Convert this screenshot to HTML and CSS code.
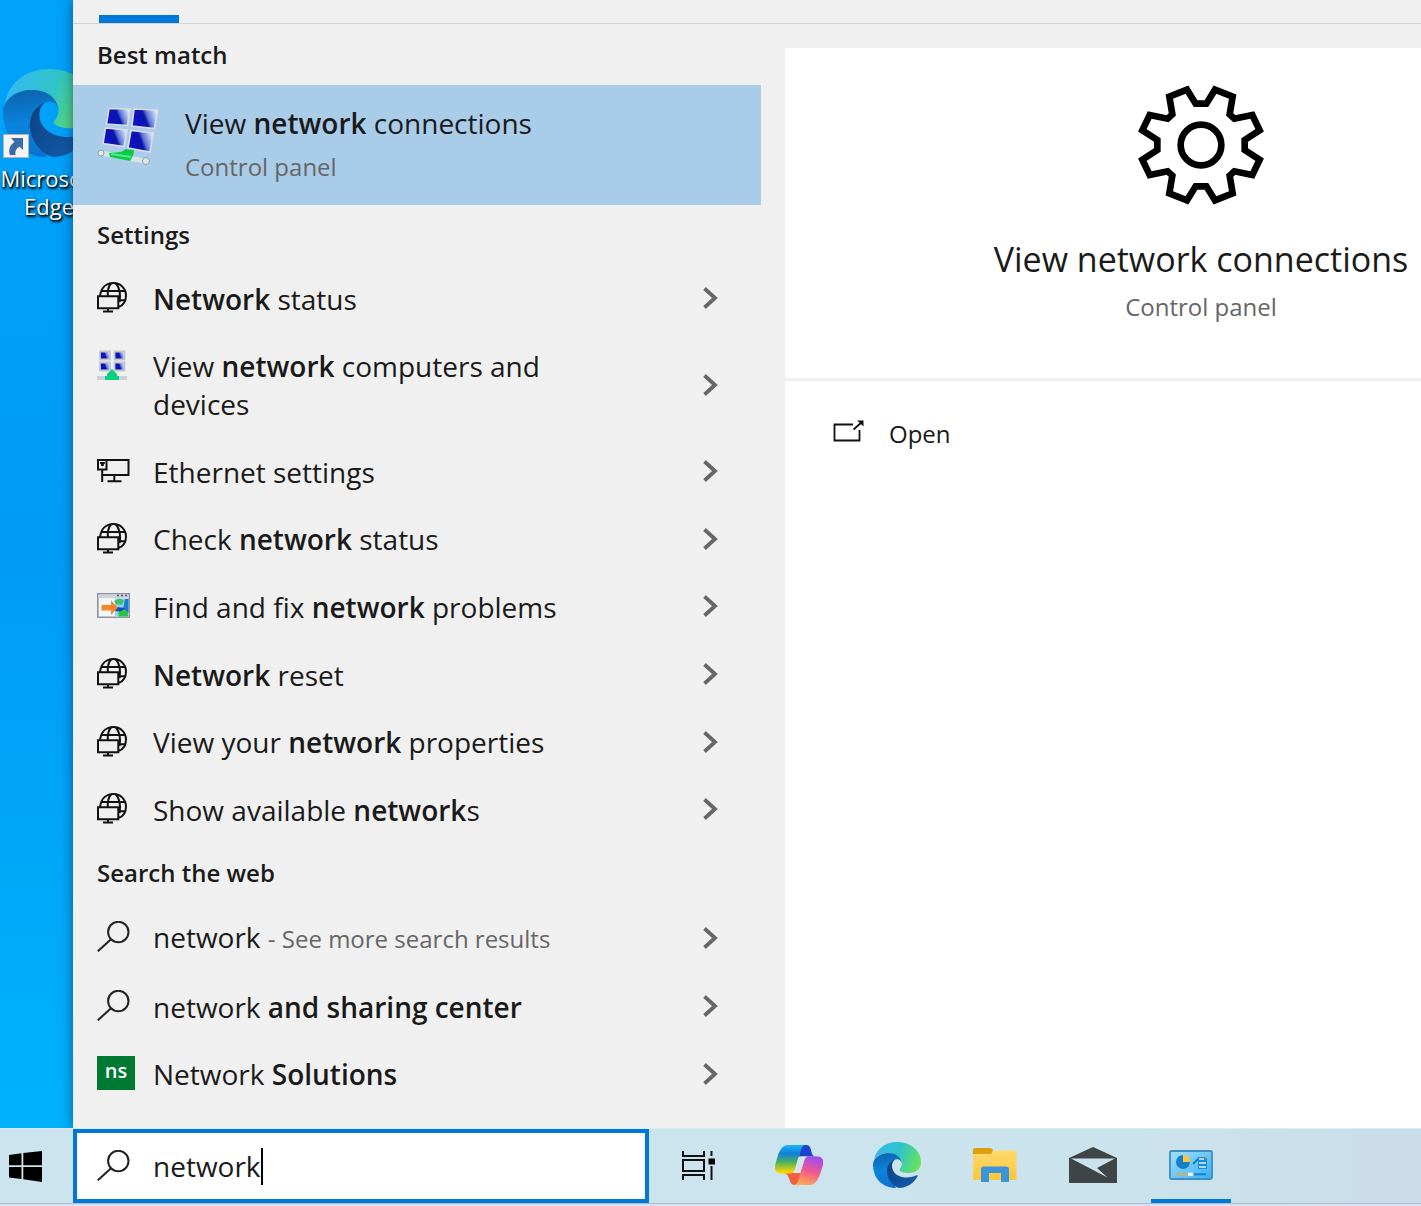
FILE: index.html
```html
<!DOCTYPE html>
<html lang="en">
<head>
<meta charset="utf-8">
<title>Search</title>
<link rel="stylesheet" href="styles.css">
</head>
<body>
<svg class="sprite" aria-hidden="true">
  <defs>
    <linearGradient id="edge-top" x1="0" y1="0.3" x2="1" y2="0.6"><stop offset="0" stop-color="#35b8f1"/><stop offset="0.5" stop-color="#2fc4c8"/><stop offset="1" stop-color="#66e35a"/></linearGradient>
    <linearGradient id="edge-left" x1="0.3" y1="0" x2="0.4" y2="1"><stop offset="0" stop-color="#0c63ae"/><stop offset="0.5" stop-color="#0a84dc"/><stop offset="1" stop-color="#0a72d0"/></linearGradient>
    <linearGradient id="edge-low" x1="0" y1="0" x2="1" y2="1"><stop offset="0" stop-color="#0d3f80"/><stop offset="1" stop-color="#1160ae"/></linearGradient>
    <linearGradient id="screen" x1="0" y1="0.6" x2="1" y2="0.3"><stop offset="0" stop-color="#0a12d0"/><stop offset="0.5" stop-color="#0c14a8"/><stop offset="0.62" stop-color="#5a74d8"/><stop offset="1" stop-color="#e4ecff"/></linearGradient>
    <linearGradient id="cop-a" x1="0" y1="0" x2="0" y2="1"><stop offset="0" stop-color="#1eb4f4"/><stop offset="0.3" stop-color="#0f7fdc"/><stop offset="0.62" stop-color="#52b45a"/><stop offset="0.95" stop-color="#ffd400"/></linearGradient>
    <linearGradient id="cop-b" x1="0.6" y1="0" x2="0.3" y2="1"><stop offset="0" stop-color="#a44cf0"/><stop offset="0.5" stop-color="#f0588c"/><stop offset="1" stop-color="#ffac54"/></linearGradient>
    <linearGradient id="folder" x1="0" y1="0" x2="0" y2="1"><stop offset="0" stop-color="#ffd96e"/><stop offset="1" stop-color="#fcc63a"/></linearGradient>
    <linearGradient id="panel-fill" x1="0" y1="0" x2="1" y2="1"><stop offset="0" stop-color="#a4e0fc"/><stop offset="1" stop-color="#36b0f6"/></linearGradient>
  </defs>
  <symbol id="i-globe" viewBox="0 0 30 31">
    <g fill="none" stroke="#111" stroke-width="2">
      <path d="M1 14.300H21.300V26.300H1zM11 26.300V29.500M6 29.600H16M3 14.300C4 6 9 1 16.500 1C24 1 29 7 29 13.500C29 19 26 23.500 21.500 25M5 9H28.600M22 18.300H28.400M10.800 14V9M11 9C11.500 5 13 2 15 1M22.300 9C21.500 5 20 2 18 1M22.500 9C23.300 13 23.300 16 22.600 20"/>
    </g>
  </symbol>
  <symbol id="i-ethernet" viewBox="0 0 33 24">
    <path fill="none" stroke="#111" stroke-width="2" d="M9.500 1H31.500V16H5.500M1 1H9.500V10.500H1zM5.200 10.500V23M17.300 16V22M10.500 22.200H24.500M3 4H7.800M4 6H6.800"/>
  </symbol>
  <symbol id="i-search" viewBox="0 0 33 31">
    <circle cx="21.300" cy="11" r="10.200" fill="none" stroke="#222" stroke-width="2"/>
    <path d="M14 18.300L.8 30.300" fill="none" stroke="#222" stroke-width="2"/>
  </symbol>
  <symbol id="i-chevron" viewBox="0 0 16 22">
    <path d="M2.500 1.500L13 11L2.500 20.500" fill="none" stroke="#666" stroke-width="3.800"/>
  </symbol>
  <symbol id="i-edge" viewBox="0 0 48 46">
    <path d="M1 18C3 7 12 0 24 0C38 0 48 9 48 20C48 27 43 31 36 31C31 31 26 29.500 26.500 27.500C27 26.500 29 25 29 21C28 15 22 11 15 11C8 11 3 14 1 18z" fill="url(#edge-top)"/>
    <path d="M0 22C1 15 8 11 15 11C22 11 28 14 29 21.500C28 18 26 17 23.500 17.200C20.500 17.500 18.500 20 19 25L20 40L23 46C10 46 0 37 0 22z" fill="url(#edge-left)"/>
    <path d="M22 17.500C16 20 13.500 25 14 31C15 38 20 44.500 26 46C34 46 41 41 44.500 34.500C44.800 33.500 44 33 43 33.600C34 38 20 35 19 25C18.800 21 20 19 22 17.500z" fill="url(#edge-low)"/>
  </symbol>
</svg>

<main class="desktop">
  <a class="shortcut" href="#edge">
    <span class="shortcut-art">
      <svg width="92" height="90"><use href="#i-edge"/></svg>
      <svg class="shortcut-arrow" width="26" height="24" viewBox="0 0 26 24"><path d="M.5.500H25.500V23.500H.5z" fill="#f4f4f4" stroke="#b9aeb0"/><path d="M8 4H20V16L16.500 12.500C13 15 12 17 12.500 21H7C5 16 7 11 11.500 8z" fill="#3b6ba8"/></svg>
    </span>
    <span class="shortcut-label">Microsoft Edge</span>
  </a>

  <section class="flyout" aria-label="Search results">
    <header class="tabs"><span class="tab-mark"></span></header>
    <div class="columns">
      <div class="results">
        <h2 class="group">Best match</h2>
        <a class="best" href="#connections">
          <svg width="62" height="60" viewBox="0 0 62 60">
            <g fill="url(#screen)" stroke="#dcdce0" stroke-width="1.600">
              <path d="M12 1.500L33 2L30.500 18.500L9.500 17z"/><path d="M37 2L60.500 3L57.500 21.500L35 19z"/>
              <path d="M8.500 21L30 23L27 39.500L6 36.500z"/><path d="M34 23.500L56.500 26L53 45L31 41z"/>
            </g>
            <path d="M4 46L48 54" stroke="#d8e4ea" stroke-width="5" stroke-linecap="round"/>
            <circle cx="4" cy="46" r="3" fill="#e8eef0" stroke="#8ea0a8"/><circle cx="49" cy="54" r="3.500" fill="#dfe8ea" stroke="#8ea0a8"/>
            <path d="M12 46L24 45L29 42L37 43L36 49L33 54L13 50z" fill="#0cc848"/><path d="M14 47L34 50" stroke="#4cf080" stroke-width="2"/>
          </svg>
          <span class="best-text"><span class="title">View <b>network</b> connections</span><span class="sub">Control panel</span></span>
        </a>

        <h2 class="group">Settings</h2>
        <ul class="list">
          <li class="row"><a class="row-link" href="#status"><svg class="icon" width="30" height="31"><use href="#i-globe"/></svg><span class="label"><b>Network</b> status</span></a><svg class="chevron" width="16" height="22"><use href="#i-chevron"/></svg></li>
          <li class="row"><a class="row-link" href="#computers"><svg class="icon" width="30" height="31" viewBox="0 0 30 31"><g fill="url(#screen)" stroke="#c4c8cc" stroke-width="1.800"><path d="M3 1.500H13V9.500H3z"/><path d="M17.500 1.500H27.500V9.500H17.500z"/><path d="M3 12.500H13V20.500H3z"/><path d="M17.500 12.500H27.500V20.500H17.500z"/></g><path d="M0 26H30V30H0z" fill="#ccd2d6"/><path d="M15 19L20 24V26H22V30H8V26H10V24z" fill="#08d080"/></svg><span class="label">View <b>network</b> computers and devices</span></a><svg class="chevron" width="16" height="22"><use href="#i-chevron"/></svg></li>
          <li class="row"><a class="row-link" href="#ethernet"><svg class="icon" width="33" height="24"><use href="#i-ethernet"/></svg><span class="label">Ethernet settings</span></a><svg class="chevron" width="16" height="22"><use href="#i-chevron"/></svg></li>
          <li class="row"><a class="row-link" href="#check"><svg class="icon" width="30" height="31"><use href="#i-globe"/></svg><span class="label">Check <b>network</b> status</span></a><svg class="chevron" width="16" height="22"><use href="#i-chevron"/></svg></li>
          <li class="row"><a class="row-link" href="#fix"><svg class="icon" width="33" height="25" viewBox="0 0 33 25"><path d="M.8.800H32.200V24.200H.8z" fill="#f4f6f8" stroke="#8b95a0" stroke-width="1.600"/><path d="M1.500 1.500H31.500V5H1.500z" fill="#ccd3da"/><path d="M20 2.500h2m2 0h2m2 0h2" stroke="#556" stroke-width="1.500"/><path d="M18 5.500H31.500V23.500H18z" fill="#8ed4f6"/><path d="M28 6H31.500V20L26 16z" fill="#1c78cc"/><path d="M17 8L22 5.500L27 7L25 12L19 11z" fill="#3cc070"/><path d="M20 14L28 15L25 19L18 18z" fill="#1550b0"/><path d="M21 20L26 17L31 19V23.500H22z" fill="#28c83c"/><path d="M4.500 12H14V7.500L21 14.500L14 22V17.500H4.500z" fill="#f5872a"/></svg><span class="label">Find and fix <b>network</b> problems</span></a><svg class="chevron" width="16" height="22"><use href="#i-chevron"/></svg></li>
          <li class="row"><a class="row-link" href="#reset"><svg class="icon" width="30" height="31"><use href="#i-globe"/></svg><span class="label"><b>Network</b> reset</span></a><svg class="chevron" width="16" height="22"><use href="#i-chevron"/></svg></li>
          <li class="row"><a class="row-link" href="#properties"><svg class="icon" width="30" height="31"><use href="#i-globe"/></svg><span class="label">View your <b>network</b> properties</span></a><svg class="chevron" width="16" height="22"><use href="#i-chevron"/></svg></li>
          <li class="row"><a class="row-link" href="#available"><svg class="icon" width="30" height="31"><use href="#i-globe"/></svg><span class="label">Show available <b>network</b>s</span></a><svg class="chevron" width="16" height="22"><use href="#i-chevron"/></svg></li>
        </ul>

        <h2 class="group">Search the web</h2>
        <ul class="list">
          <li class="row"><a class="row-link" href="#web"><svg class="icon" width="33" height="31"><use href="#i-search"/></svg><span class="label">network <small class="hint">- See more search results</small></span></a><svg class="chevron" width="16" height="22"><use href="#i-chevron"/></svg></li>
          <li class="row"><a class="row-link" href="#sharing"><svg class="icon" width="33" height="31"><use href="#i-search"/></svg><span class="label">network <b>and sharing center</b></span></a><svg class="chevron" width="16" height="22"><use href="#i-chevron"/></svg></li>
          <li class="row"><a class="row-link" href="#solutions"><span class="icon ns">ns</span><span class="label">Network <b>Solutions</b></span></a><svg class="chevron" width="16" height="22"><use href="#i-chevron"/></svg></li>
        </ul>
      </div>

      <div class="preview">
        <div class="card">
          <svg width="128" height="122" viewBox="112 72 384 366"><g fill="none" stroke="#000" stroke-width="20"><path d="M288 131L320 131L346 89L399 110L390 163L404 176L458 165L480 211L435 240L435 270L480 299L458 345L404 334L390 347L399 400L346 421L320 379L288 379L262 421L209 400L218 347L204 334L150 345L128 299L173 270L173 240L128 211L150 165L204 176L218 163L209 110L262 89Z"/><circle cx="304" cy="255" r="61"/></g></svg>
          <h1 class="card-title">View network connections</h1>
          <p class="sub">Control panel</p>
        </div>
        <div class="actions">
          <button class="action" type="button"><svg width="32" height="22" viewBox="0 0 32 22"><path d="M20 4.500H1.500V20.500H26.500V10M20.500 9.500L29 2" fill="none" stroke="#111" stroke-width="1.800"/><path d="M24 .5H30.500V6.500z" fill="#111"/></svg>Open</button>
        </div>
      </div>
    </div>
  </section>
</main>

<nav class="taskbar" aria-label="Taskbar">
  <button class="start" type="button" aria-label="Start"><svg width="33" height="31" viewBox="0 0 33 31"><path d="M0 4L12.500 2.300V14.300H0zM14.300 2L33 0V14.300H14.300zM0 16H12.500V28L0 26.500zM14.300 16H33V31L14.300 28.300z"/></svg></button>
  <label class="search"><svg class="icon" width="33" height="31"><use href="#i-search"/></svg><input class="search-input" type="text" value="network" aria-label="Search"><span class="caret"></span></label>
  <button class="task" type="button" aria-label="Task view"><svg width="33" height="29" viewBox="0 0 33 29"><path d="M1 0V5H22V0M1 9H22V20H1zM1 29V24H22V29M29.500 0V5M29.500 15V29" fill="none" stroke="#111" stroke-width="2"/><path d="M26.500 7.500H33V13.500H26.500z"/></svg></button>
  <div class="apps">
    <button class="task" type="button" aria-label="Copilot"><svg width="48" height="40" viewBox="0 0 48 40"><path d="M25 0H31C35 0 35.500 3 36.500 7C37 10 38.500 11.500 41 11.500H24z" fill="#1a44d0"/><path d="M24 40H20C15 40 15 35 13 31C12 29 11 28.500 9 28H26z" fill="#f0603c"/><path d="M13 0H30C26.500 1 26 5 24 12L20 24C19 27 18 28.500 14 28.500H6C1 28.500-1 25 .5 19C3 10 5 0 13 0z" fill="url(#cop-a)"/><path d="M35 40H19C23 39 23.500 35 25 29L29 16C30 13 31 11.500 35 11.500H43C47 11.500 49 15 48 20C45 30 42 40 35 40z" fill="url(#cop-b)"/><path d="M26 11.500H32C30 12.500 29.500 14 28.500 18L25 28H17C19 27 19.500 26 20.500 23L22.500 15C23 12.500 24 11.500 26 11.500z" fill="#d4e6f0"/></svg></button>
    <button class="task" type="button" aria-label="Microsoft Edge"><svg width="48" height="46"><use href="#i-edge"/></svg></button>
    <button class="task" type="button" aria-label="File Explorer"><svg width="44" height="34" viewBox="0 0 44 34"><path d="M0 2Q0 0 2 0H17Q19 0 20 2L18 8H0z" fill="#e09e0c"/><path d="M0 6H18L21 2.500H42Q43.500 2.500 43.500 4V32H0z" fill="url(#folder)"/><path d="M8 34V21Q8 18.500 10.500 18.500H33Q36 18.500 36 21V34H28V25H16V34z" fill="#3a94dc"/></svg></button>
    <button class="task" type="button" aria-label="Mail"><svg width="48" height="36" viewBox="0 0 48 36"><path d="M0 11L24 0L48 11V36H0z" fill="#3f4446"/><path d="M2 11.500H46L28 21L38.500 30.500z" fill="#cbe2ec"/></svg></button>
    <button class="task active" type="button" aria-label="Control Panel"><svg width="44" height="30" viewBox="0 0 44 30"><rect x="1" y="1" width="42" height="28" rx="1.500" fill="url(#panel-fill)" stroke="#3c8fc0" stroke-width="1.800"/><circle cx="14" cy="12" r="7" fill="#1580cc"/><path d="M14 12V4.500A7.500 7.500 0 0 1 21.500 12z" fill="#ffc43a"/><path d="M24 14L29 9H30" stroke="#1478bc" stroke-width="1.800" fill="none"/><path d="M29 7H38V19H29z" fill="#1d8ad4"/><path d="M30 9h5m-5 4h7m-7 4h7" stroke="#d8f2ff" stroke-width="1.600"/><path d="M36 7.500h2" stroke="#f08830" stroke-width="2"/><path d="M7 24.300H19" stroke="#d8b050" stroke-width="2"/><path d="M19 24.300H24" stroke="#fff" stroke-width="3"/><path d="M25 24.300H37" stroke="#1580cc" stroke-width="2"/></svg></button>
  </div>
</nav>
</body>
</html>
```
FILE: styles.css
```css
* { box-sizing: border-box; }

body {
  margin: 0;
  height: 100vh;
  display: flex;
  flex-direction: column;
  overflow: hidden;
  padding-bottom: 2px;
  background: #dbe2f7;
  color: #1a1a1a;
  font-family: "Open Sans", "Noto Sans", sans-serif;
  font-size: 28px;
}

h1, h2, p, ul { margin: 0; padding: 0; }
ul { list-style: none; }
a { color: inherit; text-decoration: none; }
b { font-weight: 600; }
svg { display: block; flex: none; }
button { border: 0; padding: 0; background: none; color: inherit; font: inherit; }
.sprite { position: absolute; width: 0; height: 0; }

.desktop {
  position: relative;
  flex: 1;
  min-height: 0;
  display: flex;
  padding-left: 73px;
  background: linear-gradient(#00a2fa, #009cf8 50%, #00b2fb);
}

/* Desktop shortcut, partly under the flyout */
.shortcut {
  position: absolute;
  left: 0;
  top: 68px;
  width: 98px;
  color: #fff;
  font-size: 22px;
  line-height: 28px;
  text-align: center;
  text-shadow: 1px 2px 3px #000, 1px 1px 2px #000;
}
.shortcut-art { display: block; position: relative; margin-left: 3px; }
.shortcut-arrow { position: absolute; left: 0; bottom: 0; }
.shortcut-label { display: block; padding-top: 6px; }

.flyout {
  position: relative;
  flex: 1;
  min-width: 0;
  display: flex;
  flex-direction: column;
  overflow: hidden;
  background: #f0f0f0;
  box-shadow: 0 0 12px rgba(0, 40, 80, 0.6);
}
.tabs {
  flex: none;
  display: flex;
  align-items: flex-end;
  height: 24px;
  padding-left: 26px;
  border-bottom: 1px solid #d4d4d4;
}
.tab-mark { width: 80px; height: 8px; background: #0078d7; }

.columns { flex: 1; min-height: 0; display: flex; }

.results {
  flex: none;
  width: 712px;
  display: flex;
  flex-direction: column;
  padding: 1px 24px 20px 0;
}
.group {
  flex: none;
  padding-left: 24px;
  font-size: 24px;
  font-weight: 600;
  line-height: 60px;
}
.best {
  flex: none;
  display: flex;
  align-items: center;
  gap: 26px;
  height: 120px;
  padding: 0 24px;
  background: #a9cce9;
}
.best svg { margin-bottom: 16px; }
.best-text { display: flex; flex-direction: column; }
.title { line-height: 44px; }
.sub { color: #666; font-size: 24px; line-height: 44px; }

.list { display: contents; }
.row {
  flex: 1 0 auto;
  display: flex;
  align-items: center;
  padding: 14px 43px 14px 24px;
  line-height: 38px;
}
.row-link {
  flex: 1;
  display: grid;
  grid-template-columns: 56px 1fr;
  grid-template-rows: 38px auto;
  align-items: center;
}
.label { grid-area: 1 / 2 / span 2; max-width: 440px; }
.icon { margin-bottom: 2px; }
.chevron { margin-bottom: 1px; }
.hint { color: #666; font-size: 24px; }
.ns {
  width: 38px;
  height: 34px;
  background: #007a33;
  color: #fff;
  font-size: 20px;
  font-weight: 600;
  line-height: 30px;
  text-align: center;
}

.preview {
  flex: 1 0 832px;
  display: flex;
  flex-direction: column;
  gap: 3px;
  padding-top: 24px;
}
.card {
  display: flex;
  flex-direction: column;
  align-items: center;
  height: 330px;
  padding-top: 36px;
  background: #fff;
}
.card-title { padding-top: 27px; font-size: 34px; font-weight: 400; line-height: 52px; }
.actions { flex: 1; padding: 31px 48px; background: #fff; }
.action { display: flex; align-items: center; gap: 24px; font-size: 24px; line-height: 44px; }
.action svg { margin-bottom: 6px; }

.taskbar {
  position: relative;
  flex: none;
  display: flex;
  height: 76px;
  border-top: 1px solid #dcebf3;
  border-bottom: 1px solid #a9bccb;
  background: linear-gradient(90deg, #cbe4ed, #cbe3ec 80%, #cbdcea);
}
.start { width: 73px; padding-left: 9px; }
.search {
  flex: none;
  display: flex;
  align-items: center;
  width: 576px;
  padding-left: 20px;
  border: 4px solid #0078d7;
  background: #fff;
}
.search .icon { margin-right: 23px; }
.search-input {
  field-sizing: content;
  border: 0;
  padding: 0;
  outline: 0;
  background: none;
  color: inherit;
  font: inherit;
}
.caret { width: 2px; height: 37px; background: #000; }
.task { display: flex; align-items: center; justify-content: center; width: 98px; height: 100%; }
.task svg { margin-bottom: 2px; }
.apps { display: flex; padding-left: 3px; }
.active {
  background: linear-gradient(#0078d7, #0078d7) bottom / 80px 4px no-repeat;
}
```
